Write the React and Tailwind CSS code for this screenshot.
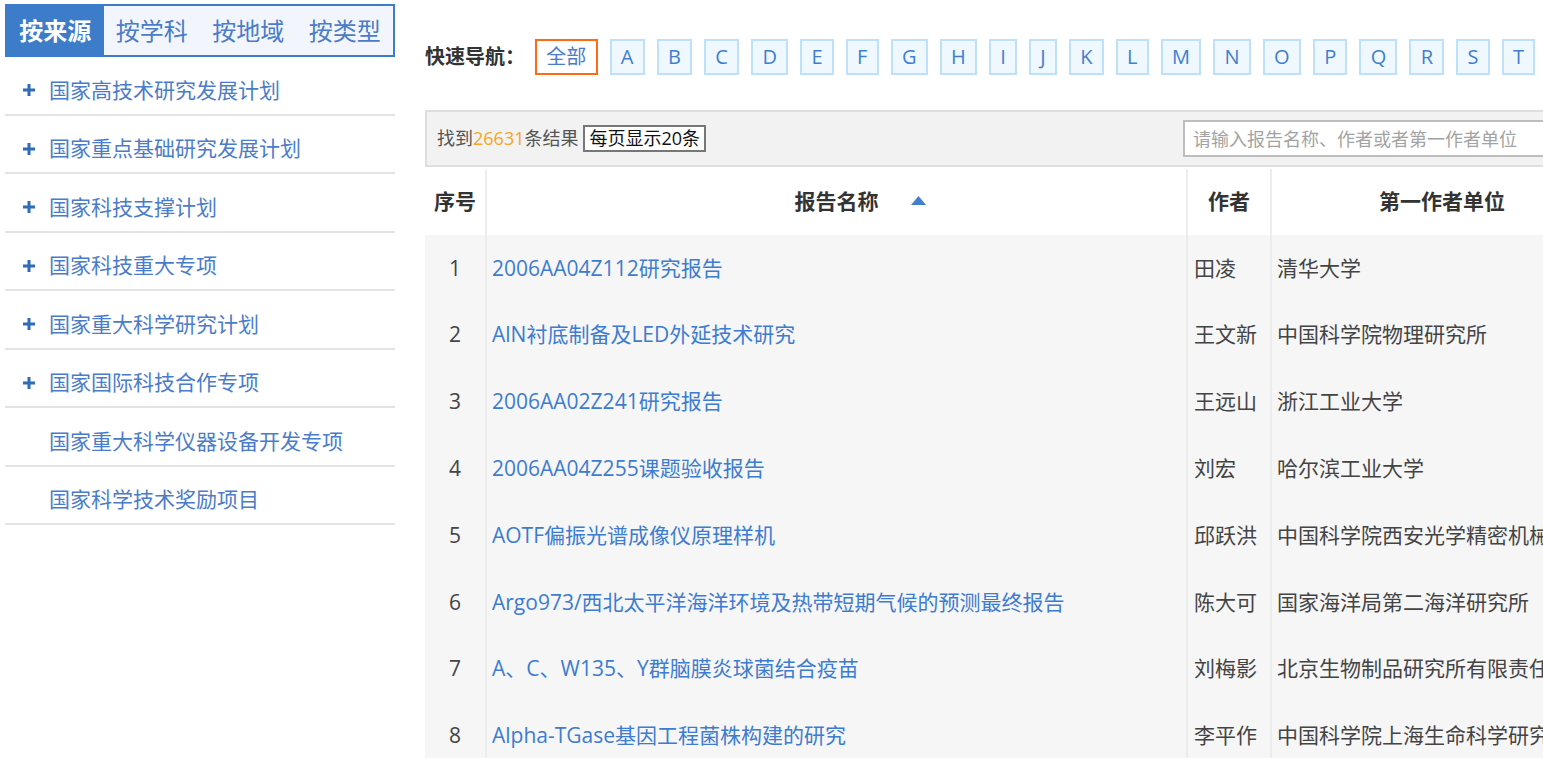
import React from 'react';

const FONT = { fontFamily: '"Open Sans", "Noto Sans CJK SC", sans-serif' };

const tabs = ['按来源', '按学科', '按地域', '按类型'];

const sources = [
  { name: '国家高技术研究发展计划', plus: true },
  { name: '国家重点基础研究发展计划', plus: true },
  { name: '国家科技支撑计划', plus: true },
  { name: '国家科技重大专项', plus: true },
  { name: '国家重大科学研究计划', plus: true },
  { name: '国家国际科技合作专项', plus: true },
  { name: '国家重大科学仪器设备开发专项', plus: false },
  { name: '国家科学技术奖励项目', plus: false },
];

// only the letters that fit in the window
const letters = 'ABCDEFGHIJKLMNOPQRST'.split('');

const rows = [
  ['2006AA04Z112研究报告', '田凌', '清华大学'],
  ['AlN衬底制备及LED外延技术研究', '王文新', '中国科学院物理研究所'],
  ['2006AA02Z241研究报告', '王远山', '浙江工业大学'],
  ['2006AA04Z255课题验收报告', '刘宏', '哈尔滨工业大学'],
  ['AOTF偏振光谱成像仪原理样机', '邱跃洪', '中国科学院西安光学精密机械研究所'],
  ['Argo973/西北太平洋海洋环境及热带短期气候的预测最终报告', '陈大可', '国家海洋局第二海洋研究所'],
  ['A、C、W135、Y群脑膜炎球菌结合疫苗', '刘梅影', '北京生物制品研究所有限责任公司'],
  ['Alpha-TGase基因工程菌株构建的研究', '李平作', '中国科学院上海生命科学研究院'],
];

// =====================================================
// SIDEBAR
// =====================================================

function PlusIcon() {
  return (
    <svg width="12" height="12" viewBox="0 0 12 12">
      <rect x="0" y="4.5" width="12" height="3" fill="#2e6bb8" />
      <rect x="4.5" y="0" width="3" height="12" fill="#2e6bb8" />
    </svg>
  );
}

function Sidebar() {
  return (
    <div className="w-[390px] shrink-0 mt-[4px]">
      <div className="flex h-[53px] border-2 border-[#3d7cc9] bg-[#f2f6fc]">
        {tabs.map((t, i) => (
          <div
            key={t}
            className={
              i === 0
                ? 'flex-1 flex items-center justify-center bg-[#3d7cc9] text-white font-bold text-[24px]'
                : 'flex-1 flex items-center justify-center text-[#4a7cc7] text-[24px]'
            }
          >
            {t}
          </div>
        ))}
      </div>

      {sources.map((s) => (
        <div
          key={s.name}
          className="h-[58.5px] pt-[10px] flex items-center border-b-2 border-[#e3e3e3]"
        >
          <span className="w-[44px] pl-[18px] flex items-center">
            {s.plus && <PlusIcon />}
          </span>
          <span className="text-[21px] text-[#4a7cc9]">{s.name}</span>
        </div>
      ))}
    </div>
  );
}

// =====================================================
// QUICK NAV
// =====================================================

function QuickNav() {
  return (
    <div className="flex items-center mt-[39px] h-[36px] whitespace-nowrap">
      <span className="text-[20px] font-bold text-[#333] mr-[10px]">快速导航：</span>
      <div className="flex gap-3">
        <div className="h-[36px] px-[9.25px] flex items-center border-2 border-[#ff6a13] text-[20px] text-[#4a7cc9] bg-white">
          全部
        </div>
        {letters.map((l) => (
          <div
            key={l}
            className="h-[36px] px-[9.25px] min-w-[28px] flex items-center justify-center border-2 border-[#bde0fb] bg-[#f0f8ff] text-[20px] text-[#3f7fce]"
          >
            {l}
          </div>
        ))}
      </div>
    </div>
  );
}

// =====================================================
// TOOLBAR
// =====================================================

function Toolbar() {
  return (
    <div className="mt-[35px] w-[1187px] h-[57px] flex items-center bg-[#f2f2f2] border-2 border-[#dedede] pl-[10px] whitespace-nowrap">
      <span className="text-[18px] text-[#555]">
        找到<span className="text-[#f5a623]">26631</span>条结果
      </span>
      <span className="ml-[5px] h-[27px] px-[4px] flex items-center border-2 border-[#777] bg-white text-[18px] text-[#111]">
        每页显示20条
      </span>
      <input
        className="ml-auto mr-[17px] w-[410px] h-[37px] border-2 border-[#bdbdbd] bg-white px-[8px] text-[18px] outline-none placeholder:text-[#a3a3a3]"
        placeholder="请输入报告名称、作者或者第一作者单位"
        style={FONT}
      />
    </div>
  );
}

// =====================================================
// TABLE
// =====================================================

function Table() {
  const cols = 'grid grid-cols-[62px_701px_84px_340px]';

  return (
    <div className="mt-[2px] w-[1187px]">
      <div className={`${cols} h-[66px] bg-white text-[21px] font-bold text-[#333]`}>
        <div className="flex items-center justify-center border-r-2 border-[#ededed]">序号</div>
        <div className="flex items-center justify-center border-r-2 border-[#ededed]">
          <span className="relative">
            报告名称
            <svg
              className="absolute left-[116px] top-[10px]"
              width="15"
              height="9"
              viewBox="0 0 15 9"
            >
              <polygon points="7.5,0 15,9 0,9" fill="#3f7fce" />
            </svg>
          </span>
        </div>
        <div className="flex items-center justify-center border-r-2 border-[#ededed]">作者</div>
        <div className="flex items-center justify-center">第一作者单位</div>
      </div>

      {rows.map((r, i) => (
        <div
          key={i}
          className={`${cols} h-[66.8px] bg-[#f6f6f6] text-[21px] whitespace-nowrap`}
        >
          <div className="flex items-center justify-center border-r-2 border-[#ececec] text-[#444]">
            {i + 1}
          </div>
          <div className="flex items-center pl-[5px] border-r-2 border-[#ececec] text-[#3d7cd0] overflow-hidden">
            {r[0]}
          </div>
          <div className="flex items-center pl-[6px] border-r-2 border-[#ececec] text-[#444] overflow-hidden">
            {r[1]}
          </div>
          <div className="flex items-center pl-[5px] text-[#444] overflow-hidden">
            {r[2]}
          </div>
        </div>
      ))}
    </div>
  );
}

// =====================================================
// PAGE
// =====================================================

export default function App() {
  return (
    <div className="w-[1543px] h-[758px] overflow-hidden bg-white" style={FONT}>
      <div className="flex pl-[5px]">
        <Sidebar />
        <div className="ml-[30px] min-w-0 flex-1">
          <QuickNav />
          <Toolbar />
          <Table />
        </div>
      </div>
    </div>
  );
}
